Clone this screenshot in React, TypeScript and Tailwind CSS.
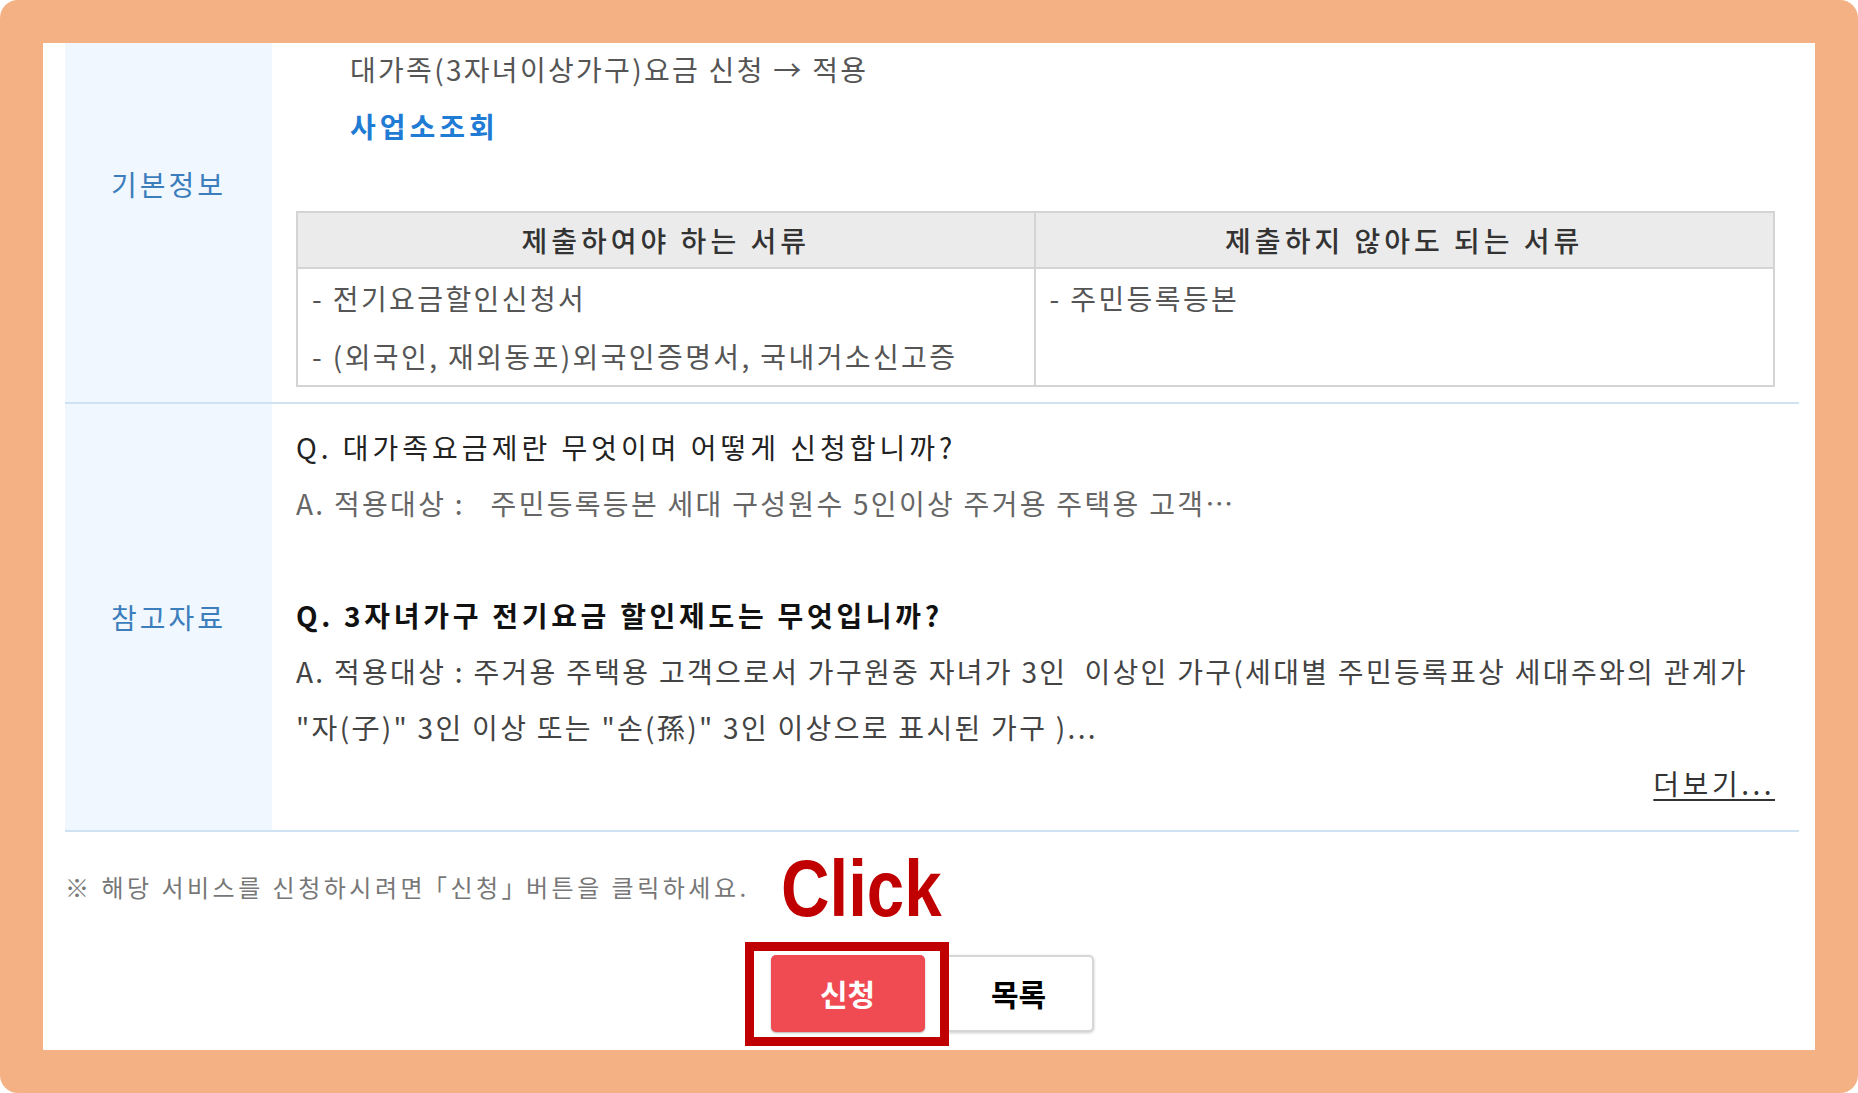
import React from 'react';

const kr = "font-['Noto_Sans_CJK_KR',sans-serif]";

const Label: React.FC<{ children: React.ReactNode; className?: string }> = ({ children, className = '' }) => (
  <div className={`w-[207px] shrink-0 bg-[#F1F7FE] text-center text-[28px] leading-[40px] tracking-[3px] text-[#3C7EBC] ${className}`}>
    {children}
  </div>
);

export default function App() {
  return (
    <div className={`w-[1858px] h-[1093px] bg-white ${kr}`}>
      <div className="h-full rounded-[18px] bg-[#F4B183] p-[43px]">
        <div className="h-full bg-white pl-[22px] pr-[16px] flex flex-col">
          {/* 기본정보 */}
          <div className="flex h-[361px] border-b-2 border-[#CFE2F3]">
            <Label className="pt-[121px]">기본정보</Label>
            <div className="flex-1 px-[24px]">
              <p className="pl-[54px] text-[28px] leading-[52px] tracking-[2.3px] text-[#555]">
                대가족(3자녀이상가구)요금 신청 → 적용
              </p>
              <p className="pl-[54px] mt-[5px] text-[28px] leading-[52px] font-semibold tracking-[4px] text-[#1F7BD3]">
                사업소조회
              </p>
              <div className="mt-[59px] border-2 border-[#D4D4D4] text-[28px]">
                <div className="grid grid-cols-2 bg-[#EBEBEB] border-b-2 border-[#D4D4D4] text-[#333] font-medium tracking-[4px]">
                  <div className="h-[54px] leading-[54px] text-center border-r-2 border-[#D4D4D4]">제출하여야 하는 서류</div>
                  <div className="h-[54px] leading-[54px] text-center">제출하지 않아도 되는 서류</div>
                </div>
                <div className="grid grid-cols-2 text-[#555] leading-[58px] tracking-[2.4px]">
                  <div className="pl-[14px] border-r-2 border-[#D4D4D4]">
                    <p>- 전기요금할인신청서</p>
                    <p>- (외국인, 재외동포)외국인증명서, 국내거소신고증</p>
                  </div>
                  <div className="pl-[14px]">
                    <p>- 주민등록등본</p>
                  </div>
                </div>
              </div>
            </div>
          </div>

          {/* 참고자료 */}
          <div className="flex h-[428px] border-b-2 border-[#CFE2F3]">
            <Label className="flex items-center justify-center">참고자료</Label>
            <div className="flex-1 px-[24px] pt-[15px] text-[28px] tracking-[2.3px]">
              <p className="leading-[56px] tracking-[4px] text-[#222]">Q. 대가족요금제란 무엇이며 어떻게 신청합니까?</p>
              <p className="leading-[56px] text-[#666]">A. 적용대상 :&nbsp;&nbsp; 주민등록등본 세대 구성원수 5인이상 주거용 주택용 고객…</p>
              <p className="mt-[56px] leading-[56px] tracking-[3.7px] font-bold text-[#111]">Q. 3자녀가구 전기요금 할인제도는 무엇입니까?</p>
              <p className="leading-[56px] text-[#444]">
                A. 적용대상 : 주거용 주택용 고객으로서 가구원중 자녀가 3인&nbsp; 이상인 가구(세대별 주민등록표상 세대주와의 관계가
                <br />
                "자(子)" 3인 이상 또는 "손(孫)" 3인 이상으로 표시된 가구 )...
              </p>
              <p className="mt-[2px] leading-[52px] text-right">
                <a href="#" className="text-[#333] tracking-[3.5px] underline underline-offset-4">더보기...</a>
              </p>
            </div>
          </div>

          {/* 안내 */}
          <p className="mt-[35px] h-[40px] leading-[40px] text-[24px] tracking-[3.5px] text-[#777]">
            ※ 해당 서비스를 신청하시려면 ｢신청｣ 버튼을 클릭하세요.
          </p>

          <div className="mt-[48px] flex justify-center gap-[19px]">
            <div className="relative">
              <span className="absolute left-[10px] -top-[106px] origin-left scale-x-[0.84] whitespace-nowrap font-['Liberation_Sans',Arial,sans-serif] font-bold text-[80px] leading-[80px] text-[#C00000]">
                Click
              </span>
              <span className="absolute z-10 -left-[26px] -top-[13px] w-[204px] h-[104px] border-[9px] border-[#C00000]" />
              <button className="w-[154px] h-[77px] rounded-[5px] bg-[#F04B53] text-white text-[30px] font-bold shadow-[0_1px_2px_rgba(0,0,0,0.3)]">
                신청
              </button>
            </div>
            <button className="w-[150px] h-[77px] rounded-[5px] bg-white border-2 border-[#D6D6D6] text-black text-[30px] font-bold shadow-[0_1px_3px_rgba(0,0,0,0.2)]">
              목록
            </button>
          </div>
        </div>
      </div>
    </div>
  );
}
